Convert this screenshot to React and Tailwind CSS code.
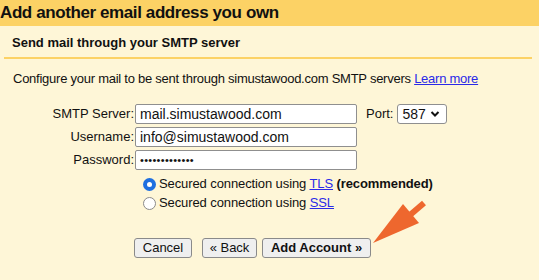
import React from "react";

const font = { fontFamily: '"Liberation Sans", Arial, sans-serif' };

function Field({ label, children }) {
  return (
    <div className="flex items-center h-[20px]">
      <div className="w-[135px] pr-[1px] text-right text-[13px] text-[#111]">{label}</div>
      {children}
    </div>
  );
}

function Box({ children }) {
  return (
    <div className="w-[222px] h-[20px] border border-[#8f8f8f] rounded-[2px] bg-white pl-[4px] flex items-center text-[14px] text-[#111] leading-none">
      {children}
    </div>
  );
}

function Radio({ checked }) {
  return checked ? (
    <div className="w-[13px] h-[13px] rounded-full bg-[#1e6fe0] flex items-center justify-center">
      <div className="w-[5px] h-[5px] rounded-full bg-white" />
    </div>
  ) : (
    <div className="w-[13px] h-[13px] rounded-full bg-white border border-[#8a8a8a]" />
  );
}

function Btn({ children, bold, w }) {
  return (
    <div
      className={
        "h-[20px] border border-[#8a8a8a] rounded-[3px] bg-[#efefef] flex items-center justify-center whitespace-nowrap text-[13px] text-[#111] " +
        w +
        (bold ? " font-bold" : "")
      }
    >
      {children}
    </div>
  );
}

export default function App() {
  return (
    <div style={font} className="relative w-[539px] h-[280px] overflow-hidden bg-[#fef6d7] text-[#111]">
      <div className="h-[26px] bg-[#fcd265] text-[17px] tracking-[-0.4px] font-bold leading-[26px] whitespace-nowrap">
        Add another email address you own
      </div>
      <div className="px-[4px]">
        <div className="h-[33px] border-b-2 border-[#fcd265] pl-[8px] pt-[9px] text-[13px] font-bold leading-[16px] w-[528px]">
          Send mail through your SMTP server
        </div>
      </div>
      <div className="pl-[13px] pt-[12px] text-[13px] tracking-[-0.25px] leading-[16px] whitespace-nowrap">
        Configure your mail to be sent through simustawood.com SMTP servers{" "}
        <span className="underline text-[#2a2ae8]">Learn more</span>
      </div>

      <div className="mt-[17px] flex flex-col gap-[3px]">
        <Field label="SMTP Server:">
          <Box>mail.simustawood.com</Box>
          <div className="ml-[9px] text-[13px]">Port:</div>
          <div className="ml-[4px] w-[50px] h-[20px] border border-[#8f8f8f] rounded-[3px] bg-white flex items-center pl-[4px] gap-[4px] text-[14px]">
            587
            <svg width="10" height="8" viewBox="0 0 10 8">
              <path d="M1.5 2 L5 5.5 L8.5 2" fill="none" stroke="#111" strokeWidth="2" />
            </svg>
          </div>
        </Field>
        <Field label="Username:">
          <Box>info@simustawood.com</Box>
        </Field>
        <Field label="Password:">
          <Box>
            <span className="text-[11px] tracking-[0.3px]">•••••••••••••</span>
          </Box>
        </Field>
      </div>

      <div className="mt-[7px] ml-[143px] flex flex-col gap-[5px] text-[13px] tracking-[-0.1px]">
        <div className="flex items-center gap-[3px] h-[14px]">
          <Radio checked />
          <span>
            Secured connection using <span className="underline text-[#2a2ae8]">TLS</span>{" "}
            <span className="font-bold">(recommended)</span>
          </span>
        </div>
        <div className="flex items-center gap-[3px] h-[14px]">
          <Radio />
          <span>
            Secured connection using <span className="underline text-[#2a2ae8]">SSL</span>
          </span>
        </div>
      </div>

      <div className="mt-[28px] ml-[134px] flex items-center">
        <Btn w="w-[58px]">Cancel</Btn>
        <div className="ml-[10px]">
          <Btn w="w-[55px]">« Back</Btn>
        </div>
        <div className="ml-[5px]">
          <Btn bold w="w-[109px]">Add Account »</Btn>
        </div>
      </div>

      <svg className="absolute left-0 top-0" width="539" height="280" viewBox="0 0 539 280">
        <line x1="424" y1="203" x2="410" y2="215" stroke="#ee672e" strokeWidth="6" />
        <polygon points="373,243 403,204 419,223" fill="#ee672e" />
      </svg>
    </div>
  );
}
